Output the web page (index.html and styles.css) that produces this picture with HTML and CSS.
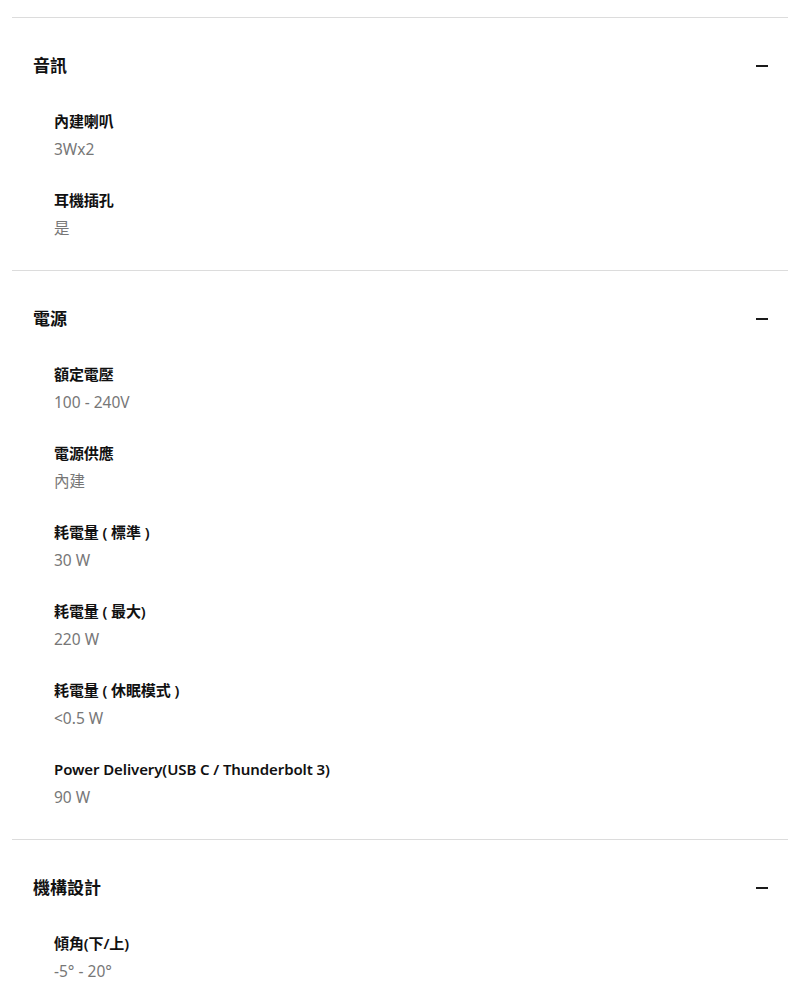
FILE: index.html
```html
<!DOCTYPE html>
<html lang="zh-Hant">
<head>
    <meta charset="UTF-8">
    <meta name="viewport" content="width=device-width, initial-scale=1.0">
    <title>規格</title>
    <link rel="stylesheet" href="styles.css">
</head>
<body>

<div class="specs">
    <!-- 音訊 -->
    <section class="spec-group">
        <div class="spec-head">
            <h3>音訊</h3>
            <span class="toggle"></span>
        </div>
        <ul class="spec-list">
            <li><p class="spec-name">內建喇叭</p><p class="spec-value">3Wx2</p></li>
            <li><p class="spec-name">耳機插孔</p><p class="spec-value">是</p></li>
        </ul>
    </section>

    <!-- 電源 -->
    <section class="spec-group">
        <div class="spec-head">
            <h3>電源</h3>
            <span class="toggle"></span>
        </div>
        <ul class="spec-list">
            <li><p class="spec-name">額定電壓</p><p class="spec-value">100 - 240V</p></li>
            <li><p class="spec-name">電源供應</p><p class="spec-value">內建</p></li>
            <li><p class="spec-name">耗電量 ( 標準 )</p><p class="spec-value">30 W</p></li>
            <li><p class="spec-name">耗電量 ( 最大)</p><p class="spec-value">220 W</p></li>
            <li><p class="spec-name">耗電量 ( 休眠模式 )</p><p class="spec-value">&lt;0.5 W</p></li>
            <li><p class="spec-name">Power Delivery(USB C / Thunderbolt 3)</p><p class="spec-value">90 W</p></li>
        </ul>
    </section>

    <!-- 機構設計 -->
    <section class="spec-group">
        <div class="spec-head">
            <h3>機構設計</h3>
            <span class="toggle"></span>
        </div>
        <ul class="spec-list">
            <li><p class="spec-name">傾角(下/上)</p><p class="spec-value">-5° - 20°</p></li>
        </ul>
    </section>
</div>

</body>
</html>
```

FILE: styles.css
```css
body {
    margin: 0;
    background: #fff;
    color: #111;
    font-family: "Noto Sans", "Noto Sans CJK TC", sans-serif;
}
.specs {
    padding: 17px 12px 0;
}
.spec-group {
    border-top: 1px solid #dcdcdc;
}
.spec-head {
    display: flex;
    align-items: center;
    justify-content: space-between;
    padding: 36px 20px 0 21px;
    height: 24px;
}
.spec-head h3 {
    margin: 0;
    font-size: 17px;
    line-height: 24px;
    font-weight: 700;
}
.toggle {
    display: block;
    width: 12px;
    height: 2px;
    background: #1a1a1a;
}
.spec-list {
    list-style: none;
    margin: 0;
    padding: 29px 0 28px 42px;
    display: flex;
    flex-direction: column;
    gap: 23px;
}
.spec-list p {
    margin: 0;
    line-height: 28px;
}
.spec-name {
    font-size: 15px;
    font-weight: 600;
    color: #111;
    letter-spacing: -0.1px;
}
.spec-value {
    font-size: 15.5px;
    color: #777;
}
```
